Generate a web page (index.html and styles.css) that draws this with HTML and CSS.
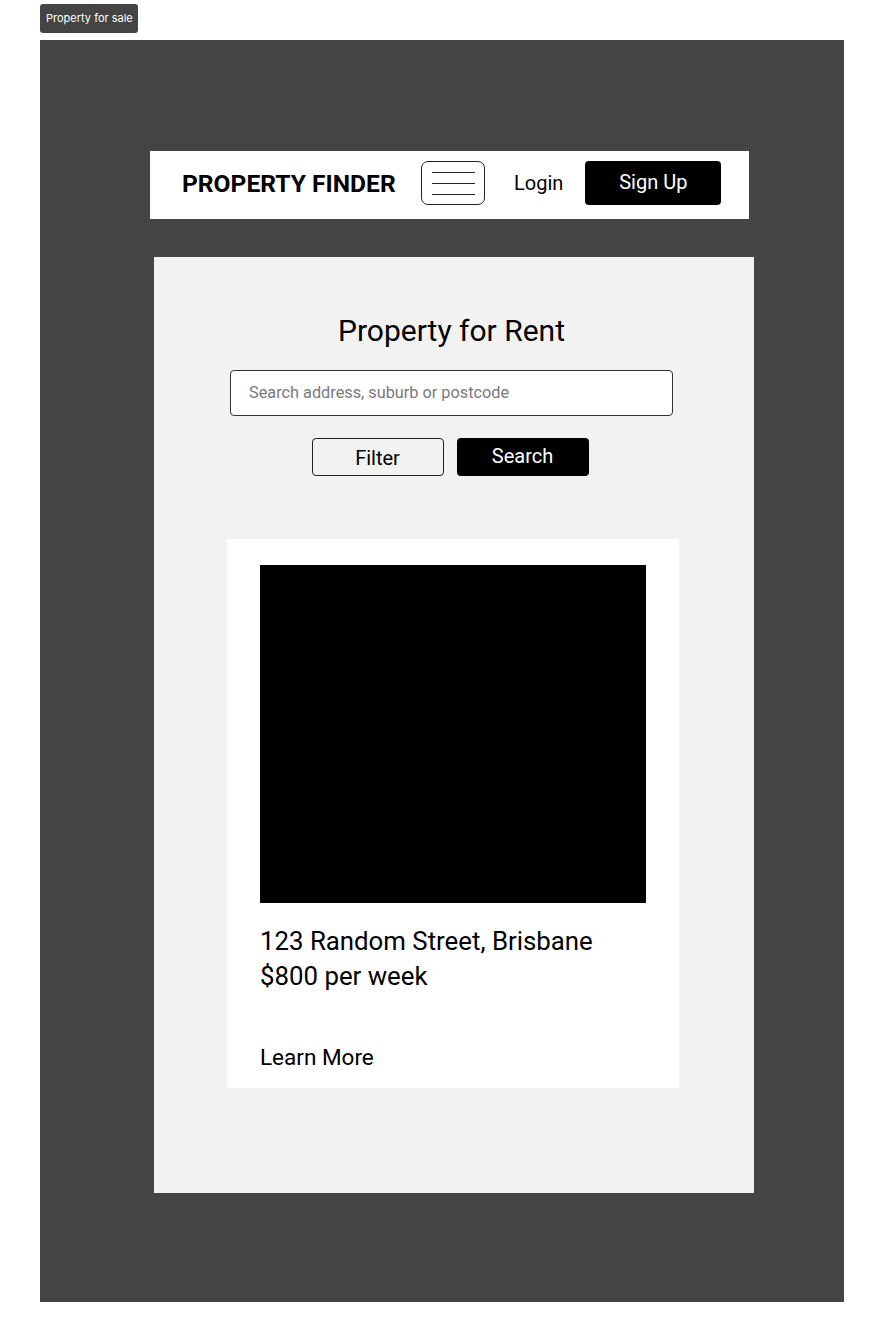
FILE: index.html
```html
<!DOCTYPE html>
<html>
<head>
<meta charset="utf-8">
<link rel="stylesheet" href="styles.css">
</head>
<body>
<div class="page">
  <div class="frame-label">Property for sale</div>
  <div class="frame">
    <header class="header">
      <div class="brand">PROPERTY FINDER</div>
      <div class="menu-btn">
        <span></span><span></span><span></span>
      </div>
      <div class="login">Login</div>
      <div class="signup">Sign Up</div>
    </header>
    <main class="panel">
      <div class="search-area">
        <h1 class="title">Property for Rent</h1>
        <div class="search-input">Search address, suburb or postcode</div>
        <div class="actions">
          <div class="btn btn-outline">Filter</div>
          <div class="btn btn-dark">Search</div>
        </div>
      </div>
      <div class="card">
        <div class="card-image"></div>
        <div class="card-address">123 Random Street, Brisbane</div>
        <div class="card-price">$800 per week</div>
        <div class="card-link">Learn More</div>
      </div>
    </main>
  </div>
</div>
</body>
</html>
```
FILE: styles.css
```css
* { box-sizing: border-box; }
html, body { margin: 0; padding: 0; background: #fff; }
body { font-family: Roboto, "Liberation Sans", sans-serif; color: #000; }

.page { padding: 4px 0 0 40px; }

.frame-label {
  display: inline-block;
  height: 29px;
  width: 98px;
  background: #444;
  color: #fff;
  font-family: Inter, "Liberation Sans", sans-serif;
  font-size: 11px;
  line-height: 29px;
  padding-left: 6px;
  border-radius: 3px;
  vertical-align: top;
}

.frame {
  margin-top: 7px;
  width: 804px;
  height: 1262px;
  background: #444;
  padding-top: 111px;
}

.header {
  margin-left: 110px;
  width: 599px;
  height: 68px;
  background: #fff;
  display: flex;
  align-items: flex-start;
  padding-left: 32px;
}

.brand {
  margin-top: 18px;
  font-weight: 700;
  font-size: 24.6px;
  line-height: 30px;
  width: 214px;
  white-space: nowrap;
}

.menu-btn {
  margin-left: 25px;
  margin-top: 10px;
  width: 64px;
  height: 44px;
  border: 1px solid #222;
  border-radius: 7px;
  display: flex;
  flex-direction: column;
  justify-content: center;
  align-items: center;
  gap: 10px;
}
.menu-btn span {
  display: block;
  width: 43px;
  height: 1px;
  background: #222;
}

.login {
  margin-left: 29px;
  margin-top: 18px;
  font-size: 20px;
  line-height: 28px;
}

.signup {
  margin-left: 22px;
  margin-top: 10px;
  width: 136px;
  height: 44px;
  background: #000;
  color: #fff;
  border-radius: 4px;
  font-size: 20px;
  display: flex;
  align-items: center;
  justify-content: center;
  padding-bottom: 2px;
}

.panel {
  margin-left: 114px;
  margin-top: 38px;
  width: 600px;
  height: 936px;
  background: #f2f2f2;
  padding-top: 56px;
}

.search-area {
  display: flex;
  flex-direction: column;
  align-items: center;
  padding-right: 5px;
}

.title {
  margin: 0;
  font-weight: 400;
  font-size: 30px;
  line-height: 36px;
}

.search-input {
  margin-top: 21px;
  width: 443px;
  height: 46px;
  background: #fff;
  border: 1px solid #333;
  border-radius: 4px;
  color: #7a7a7a;
  font-size: 16.3px;
  line-height: 44px;
  padding-left: 18px;
}

.actions {
  margin-top: 22px;
  display: flex;
  gap: 13px;
  margin-right: 3px;
}

.btn {
  width: 132px;
  height: 38px;
  border-radius: 4px;
  font-size: 20px;
  display: flex;
  align-items: center;
  justify-content: center;
}
.btn-outline { border: 1px solid #222; background: #f2f2f2; padding-top: 2px; }
.btn-dark { background: #000; color: #fff; padding-bottom: 2px; }

.card {
  margin: 63px 0 0 73px;
  width: 452px;
  height: 549px;
  background: #fff;
  padding: 26px 0 0 33px;
}

.card-image {
  width: 386px;
  height: 338px;
  background: #000;
}

.card-address, .card-price {
  font-size: 25.8px;
  line-height: 35px;
}
.card-address { margin-top: 21px; }

.card-link {
  margin-top: 49px;
  font-size: 22.5px;
  line-height: 28px;
}
```
